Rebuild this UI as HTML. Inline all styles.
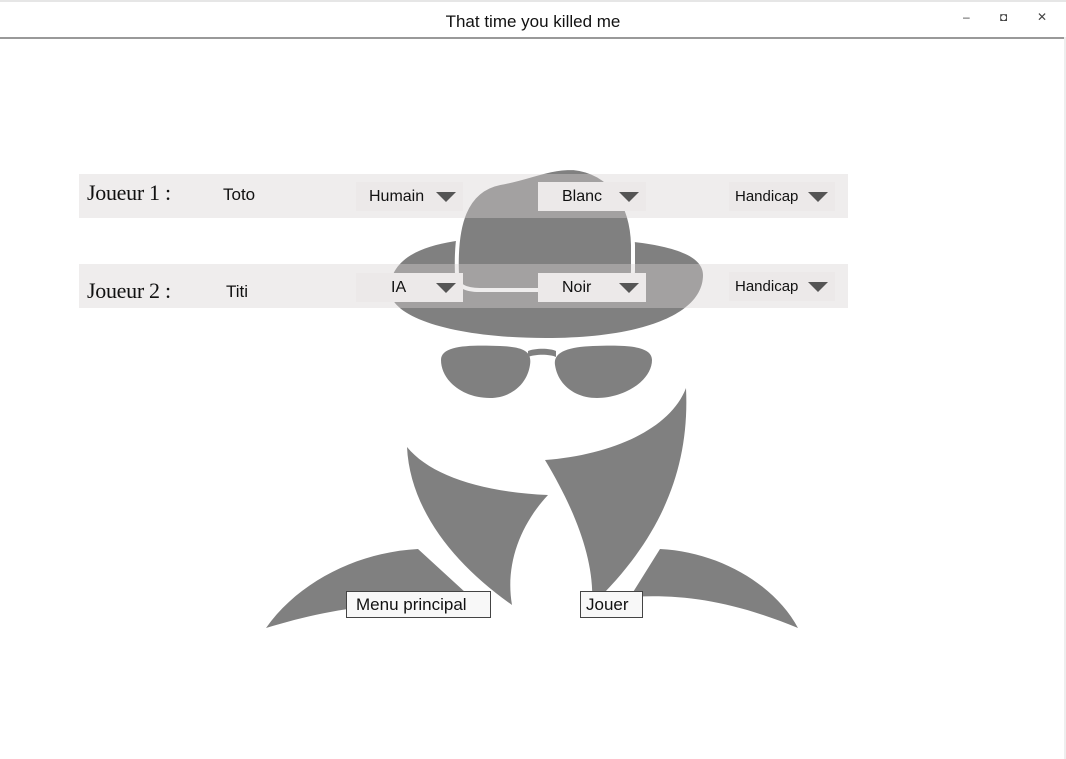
<!DOCTYPE html>
<html><head><meta charset="utf-8"><style>
body{margin:0;width:1066px;height:759px;background:#fff;position:relative;overflow:hidden;font-family:"Liberation Sans",sans-serif}
.title{position:absolute;left:0;top:0;width:1066px;height:39px;border-top:2px solid #e6e6e6;border-bottom:2px solid #999;box-sizing:border-box;text-align:center;line-height:40px;font-size:17px;color:#111}
.ctl{position:absolute;top:10px;font-size:12px;color:#444}
.band{position:absolute;left:79px;width:769px;height:44px;background:rgba(215,210,210,0.4)}
.lbl{position:absolute;font-family:"Liberation Serif",serif;font-size:22px;color:#111;letter-spacing:-0.3px}
.name{position:absolute;font-size:17px;color:#111}
.dd{position:absolute;height:29px;background:#ece9e9;font-size:16px;color:#111;line-height:29px;box-sizing:border-box}
.tri{position:absolute;width:0;height:0;border-left:10px solid transparent;border-right:10px solid transparent;border-top:10px solid #555;top:10px}
.btn{position:absolute;height:27px;border:1px solid #444;background:#f8f8f8;font-size:17px;line-height:26px;box-sizing:border-box;color:#111;padding-left:6px}
.rb{position:absolute;right:0;top:37px;width:2px;height:722px;background:#eee}
</style></head><body>
<div class="title">That time you killed me</div>
<div class="ctl" style="left:963px">–</div><div class="ctl" style="left:1000px">◘</div><div class="ctl" style="left:1037px">✕</div>
<div class="rb"></div>
<svg style="position:absolute;left:0;top:0" width="1066" height="759">
<g fill="#808080">
<path d="M390 290 C390 240 470 235 546 238 C630 238 703 245 703 275 C703 315 640 338 546 338 C455 338 390 318 390 290Z"/>
<path d="M457 275 C455 225 465 190 500 183 C530 178 545 168 573 168 C612 172 632 205 633 245 L633 270 C633 285 625 290 610 290 L480 290 C465 290 457 286 457 275Z" stroke="#fff" stroke-width="4"/>
<path d="M441 360 C441 345 470 345 500 346 C525 347 532 352 530 365 C527 385 510 398 490 398 C462 398 441 380 441 360Z"/>
<path d="M652 360 C652 345 623 345 593 346 C568 347 553 352 555 365 C558 385 575 398 597 398 C625 398 652 380 652 360Z"/>
<path d="M528 351 C535 348 550 348 556 351 L556 357 C550 354 535 354 528 357Z"/>
<path d="M407 447 C430 475 480 492 548 495 C520 525 505 565 512 605 C455 565 410 510 407 447Z"/>
<path d="M686 388 C670 430 610 455 545 460 C575 510 595 560 592 605 C660 540 690 470 686 388Z"/>
<path d="M266 628 C300 580 360 552 418 549 L490 615 C420 595 340 605 266 628Z"/>
<path d="M660 549 C720 552 775 585 798 628 C730 600 680 594 630 597 Z"/>
</g></svg>
<div class="band" style="top:174px"></div>
<div class="band" style="top:264px"></div>
<div class="lbl" style="left:87px;top:180px">Joueur 1 :</div>
<div class="lbl" style="left:87px;top:278px">Joueur 2 :</div>
<div class="name" style="left:223px;top:185px">Toto</div>
<div class="name" style="left:226px;top:282px">Titi</div>
<div class="dd" style="left:356px;top:182px;width:107px;padding-left:13px">Humain<span class="tri" style="left:80px"></span></div>
<div class="dd" style="left:538px;top:182px;width:108px;padding-left:24px">Blanc<span class="tri" style="left:81px"></span></div>
<div class="dd" style="left:729px;top:182px;width:106px;padding-left:6px;font-size:15px">Handicap<span class="tri" style="left:79px"></span></div>
<div class="dd" style="left:356px;top:273px;width:107px;padding-left:35px">IA<span class="tri" style="left:80px"></span></div>
<div class="dd" style="left:538px;top:273px;width:108px;padding-left:24px">Noir<span class="tri" style="left:81px"></span></div>
<div class="dd" style="left:729px;top:272px;width:106px;padding-left:6px;font-size:15px">Handicap<span class="tri" style="left:79px"></span></div>
<div class="btn" style="left:346px;top:591px;width:145px;padding-left:9px">Menu principal</div>
<div class="btn" style="left:580px;top:591px;width:63px;padding-left:5px">Jouer</div>
</body></html>
